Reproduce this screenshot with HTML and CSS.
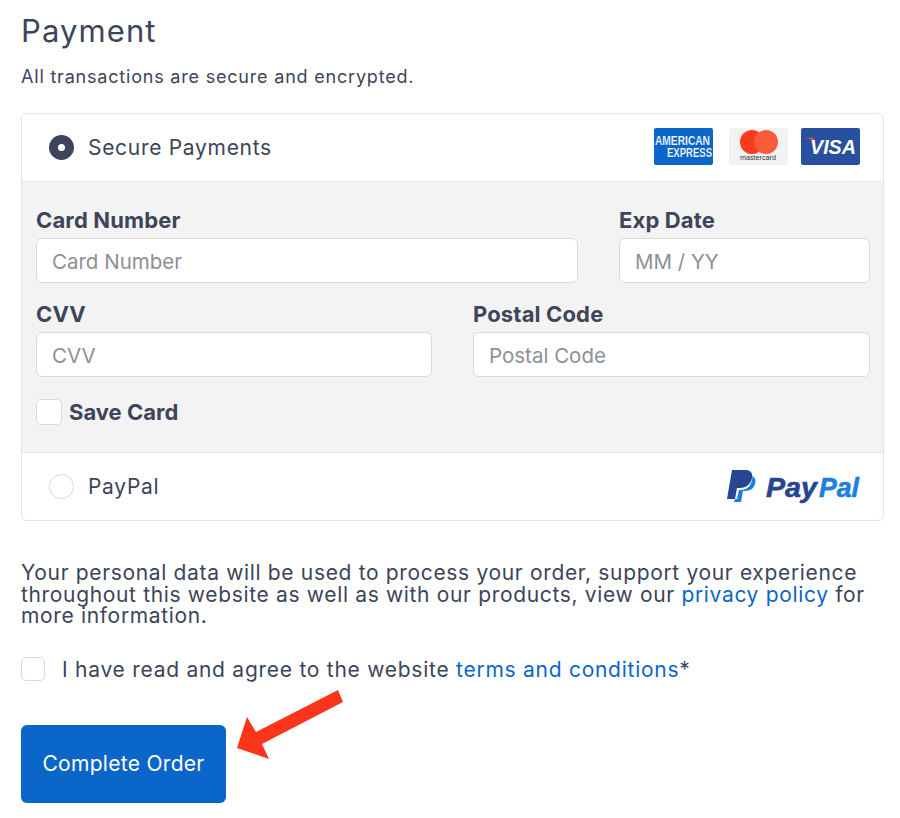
FILE: index.html
```html
<!DOCTYPE html>
<html lang="en">
<head>
  <meta charset="UTF-8">
  <title>Payment</title>
  <link rel="stylesheet" href="styles.css">
</head>
<body>

  <h1 class="title">Payment</h1>
  <p class="subtitle">All transactions are secure and encrypted.</p>

  <div class="payment-box">
    <div class="method">
      <span class="radio checked"></span>
      <span class="method-name">Secure Payments</span>
      <div class="logos">
        <svg class="card amex-card" width="59" height="37" viewBox="0 0 59 37">
          <rect width="59" height="37" rx="2" fill="#0b66c9"/>
          <text class="amex" x="1" y="17" textLength="55" lengthAdjust="spacingAndGlyphs">AMERICAN</text>
          <text class="amex" x="13" y="29" textLength="45" lengthAdjust="spacingAndGlyphs">EXPRESS</text>
        </svg>
        <svg class="card" width="59" height="37" viewBox="0 0 59 37">
          <rect width="59" height="37" rx="2" fill="#f2f2f2"/>
          <circle cx="23" cy="14" r="12" fill="#fa3a1c"/>
          <circle cx="37" cy="14" r="12" fill="#fb5a3a"/>
          <text class="mc" x="11" y="32" textLength="36" lengthAdjust="spacingAndGlyphs">mastercard</text>
        </svg>
        <svg class="card" width="59" height="37" viewBox="0 0 59 37">
          <rect width="59" height="37" rx="2" fill="#28509e"/>
          <path d="M4 10l8-0.500 3 6-4-4z" fill="#e8563a"/>
          <text class="visa" x="9" y="26" textLength="46" lengthAdjust="spacingAndGlyphs">VISA</text>
        </svg>
      </div>
    </div>

    <div class="card-form">
      <div class="form-row">
        <div class="field wide">
          <label>Card Number</label>
          <input type="text" placeholder="Card Number">
        </div>
        <div class="field narrow">
          <label>Exp Date</label>
          <input type="text" placeholder="MM / YY">
        </div>
      </div>
      <div class="form-row">
        <div class="field half">
          <label>CVV</label>
          <input type="text" placeholder="CVV">
        </div>
        <div class="field half-right">
          <label>Postal Code</label>
          <input type="text" placeholder="Postal Code">
        </div>
      </div>
      <div class="save-card">
        <span class="checkbox"></span>
        <span>Save Card</span>
      </div>
    </div>

    <div class="method">
      <span class="radio"></span>
      <span class="method-name">PayPal</span>
      <div class="logos">
        <svg width="134" height="36" viewBox="0 0 134 36">
          <path d="M6 1H20c5 0 7 4 6 8-1 6-6 10-12 10h-3L9 30H1z" fill="#28458f"/>
          <path d="M26.500 7c3 2 3.500 5 2.500 8-1.500 5-5.500 7-10 7h-2l-2 11H8l1-3h2l2-9h2c6 0 11-4 11.500-14z" fill="#1f7fe0"/>
          <text class="pp-text pay" x="40" y="28" textLength="51" lengthAdjust="spacingAndGlyphs">Pay</text>
          <text class="pp-text pal" x="93" y="28" textLength="40" lengthAdjust="spacingAndGlyphs">Pal</text>
        </svg>
      </div>
    </div>
  </div>

  <p class="privacy">Your personal data will be used to process your order, support your experience throughout this website as well as with our products, view our <a href="#">privacy policy</a> for more information.</p>

  <div class="terms">
    <span class="checkbox small"></span>
    <span>I have read and agree to the website <a href="#">terms and conditions</a>*</span>
  </div>

  <div class="order">
    <button class="complete">Complete Order</button>
    <svg class="arrow" width="106" height="69" viewBox="0 0 106 69">
      <path d="M0 58L10 27 19 42 101 0 106 12 25 54 32 69z" fill="#fb341c"/>
    </svg>
  </div>

</body>
</html>
```

FILE: styles.css
```css
body {
  margin: 0;
  padding: 0 16px 0 21px;
  background-color: white;
  color: #3c4559;
  font-family: Inter, "Noto Sans", sans-serif;
  overflow: hidden;
}

a {
  color: #0b66c9;
  text-decoration: none;
}

.title {
  margin: 0;
  padding-top: 13px;
  font-size: 31px;
  line-height: 36px;
  font-weight: 400;
  letter-spacing: 1.1px;
}

.subtitle {
  margin: 0;
  padding-top: 17px;
  font-size: 18px;
  line-height: 22px;
  letter-spacing: 0.8px;
}

.payment-box {
  margin-top: 25px;
  border: 1px solid #e4e5e7;
  border-radius: 6px;
}

.method {
  height: 67px;
  padding: 0 23px 0 27px;
  display: flex;
  align-items: center;
}

.method-name {
  margin-left: 14px;
  font-size: 21px;
  letter-spacing: 0.7px;
}

.radio {
  width: 25px;
  height: 25px;
  box-sizing: border-box;
  border: 1px solid #d8d9db;
  border-radius: 50%;
}

.radio.checked {
  border: 9.5px solid #3c4559;
  background-color: white;
}

.logos {
  margin-left: auto;
  display: flex;
  align-items: center;
  gap: 13px;
}

.card {
  margin-bottom: 2px;
}

.amex-card {
  margin-right: 3px;
}

.amex {
  font: bold 13px "Liberation Sans", sans-serif;
  fill: white;
  stroke: #0b66c9;
  stroke-width: 0.2px;
}

.mc {
  font: 8px "Liberation Sans", sans-serif;
  fill: #333;
}

.visa {
  font: italic bold 21px "Liberation Sans", sans-serif;
  fill: white;
}

.pp-text {
  font: italic bold 28px "Liberation Sans", sans-serif;
  stroke-width: 0.6px;
}

.pay {
  fill: #28458f;
  stroke: #28458f;
}

.pal {
  fill: #1f7fe0;
  stroke: #1f7fe0;
}

.card-form {
  padding: 26px 13px 27px 14px;
  background-color: #f3f3f3;
  border-top: 1px solid #e4e5e7;
  border-bottom: 1px solid #e4e5e7;
}

.form-row {
  display: flex;
  gap: 41px;
  margin-bottom: 19px;
}

.field {
  display: flex;
  flex-direction: column;
  min-width: 0;
}

.wide {
  flex: 0 0 542px;
}

.narrow {
  flex: 1;
}

.half {
  flex: 0 0 396px;
}

.half-right {
  flex: 1;
}

.field label {
  font-size: 22px;
  line-height: 24px;
  font-weight: 700;
  letter-spacing: 0.15px;
  margin-bottom: 6px;
}

.field input {
  width: 100%;
  height: 45px;
  box-sizing: border-box;
  padding: 1px 15px 0;
  border: 1px solid #d9dadc;
  border-radius: 6px;
  background-color: white;
  font-family: Inter, "Noto Sans", sans-serif;
  font-size: 20.5px;
  outline: none;
}

.field input::placeholder {
  color: #8d9097;
  opacity: 1;
}

.save-card {
  display: flex;
  align-items: center;
  gap: 7px;
  margin-top: 22px;
  font-size: 22px;
  font-weight: 700;
}

.checkbox {
  width: 26px;
  height: 26px;
  box-sizing: border-box;
  border: 1px solid #d9dadc;
  border-radius: 5px;
  background-color: white;
  flex: none;
}

.checkbox.small {
  width: 24px;
  height: 24px;
}

.privacy {
  margin: 41px 0 0;
  font-size: 21px;
  line-height: 21.5px;
  letter-spacing: 0.66px;
}

.terms {
  margin-top: 30px;
  display: flex;
  align-items: center;
  gap: 17px;
  font-size: 21px;
  letter-spacing: 0.74px;
}

.order {
  margin-top: 43px;
  position: relative;
}

.complete {
  display: block;
  width: 205px;
  height: 78px;
  border: none;
  border-radius: 6px;
  background-color: #0b66c9;
  color: white;
  font-family: Inter, "Noto Sans", sans-serif;
  font-size: 21px;
  letter-spacing: 0.3px;
}

.arrow {
  position: absolute;
  left: 216px;
  top: -35px;
}
```
